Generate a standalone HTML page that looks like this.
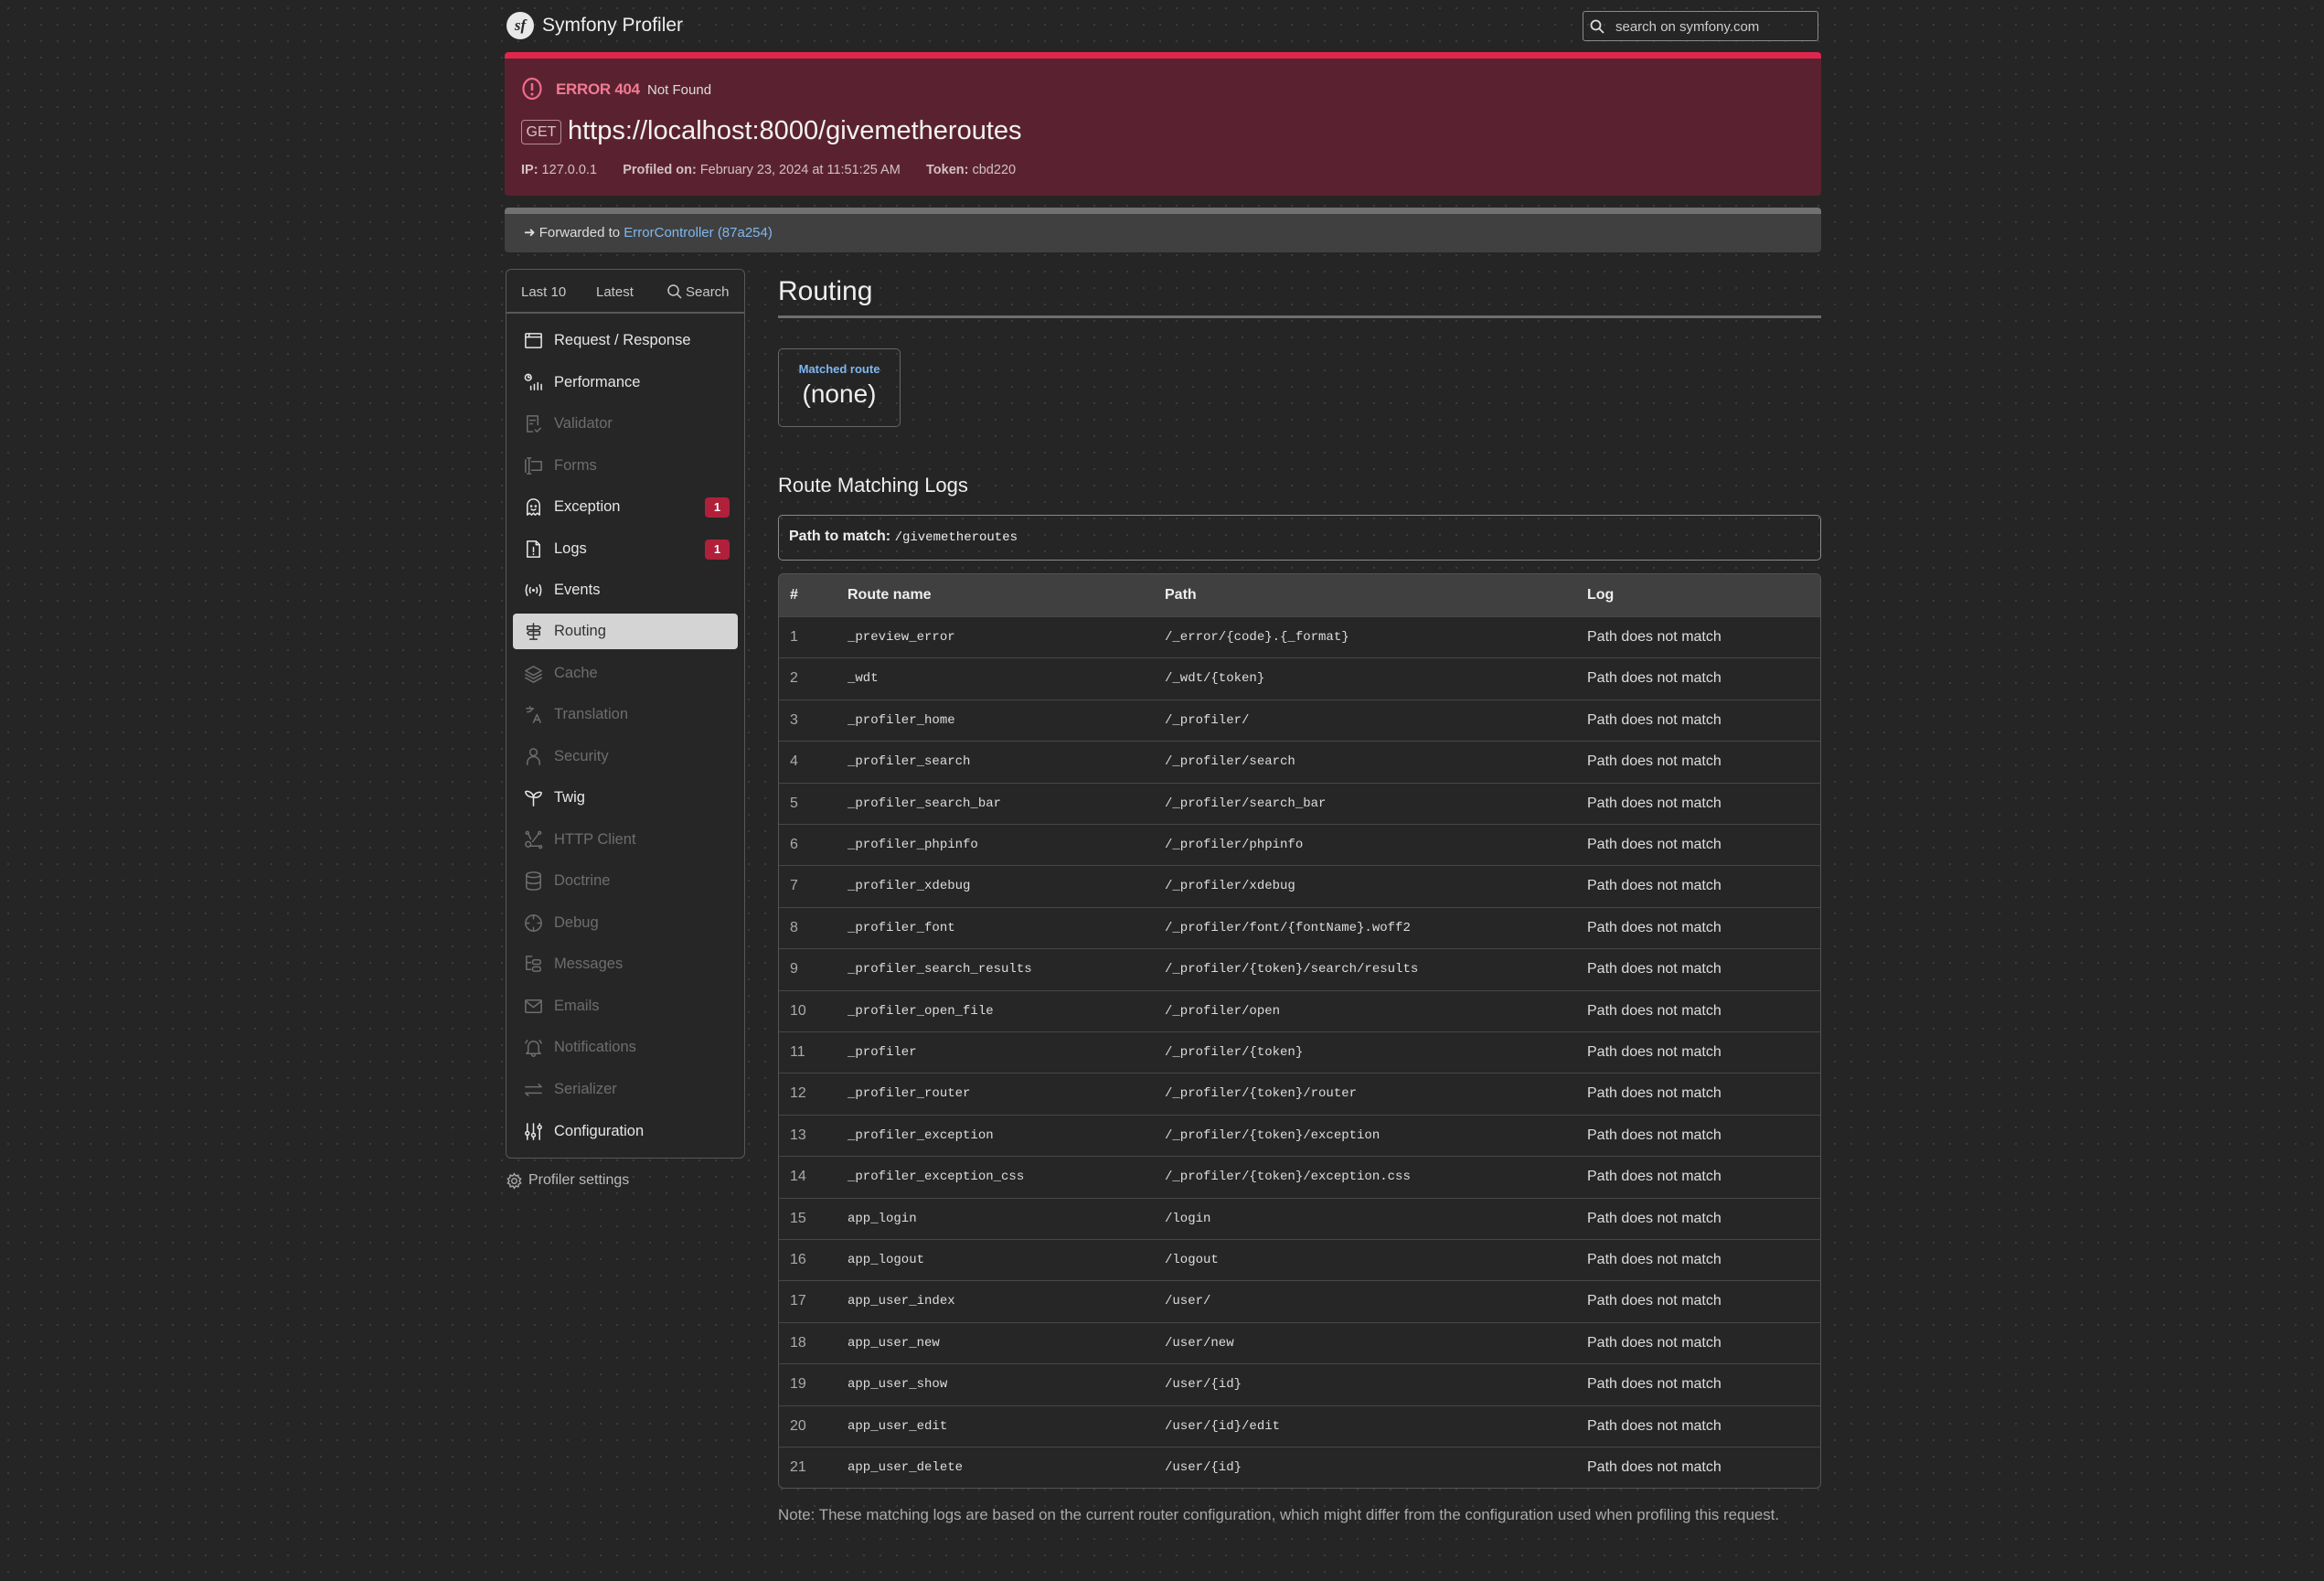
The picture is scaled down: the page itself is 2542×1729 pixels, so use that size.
<!DOCTYPE html>
<html><head><meta charset="utf-8"><style>
*{box-sizing:border-box;margin:0;padding:0}
html,body{width:2542px;height:1729px;overflow:hidden}
body{background:#252525;background-image:radial-gradient(#3b3b3b 1.2px,transparent 1.3px);background-size:18px 18px;font-family:"Liberation Sans",sans-serif;color:#e0e0e0;position:relative}
.a{position:absolute}
.mono{font-family:"Liberation Mono",monospace}
.menu .it{position:absolute;left:561px;width:246px;height:39px;display:flex;align-items:center;font-size:16.5px;border-radius:4px}
.menu .it svg{position:absolute;left:11px;top:8px;width:23px;height:23px;fill:none;stroke:currentColor;stroke-width:1.6;stroke-linecap:round;stroke-linejoin:round}
.menu .it span{position:absolute;left:45px}
.on{color:#e6e6e6}.off{color:#6d6d6d}
.badge{position:absolute;right:9px;top:9px;width:27px;height:22px;background:#b0203a;border-radius:4px;color:#fff;font-size:13px;font-weight:bold;text-align:center;line-height:22px}
.tbl{position:absolute;left:851px;top:627px;width:1141px;height:1001px;border:1px solid #555;border-radius:6px;overflow:hidden;background:#262626}
.row{position:absolute;left:0;width:1141px;height:45.4px;border-top:1px solid #474747;font-size:16px;color:#ddd}
.row div{position:absolute;top:13px}
.c1{left:12px;color:#aaa}.c2{left:75px;font-family:"Liberation Mono",monospace;font-size:14px;top:14px!important}.c3{left:422px;font-family:"Liberation Mono",monospace;font-size:14px;top:14px!important}.c4{left:884px}
</style></head><body>

<div class="a" style="left:554px;top:13px;width:30px;height:30px;border-radius:50%;background:#e8e8e8;color:#252525;font:italic bold 17px 'Liberation Serif',serif;text-align:center;line-height:30px">sf</div>
<div class="a" style="left:593px;top:16px;font-size:21px;color:#eee">Symfony Profiler</div>
<div class="a" style="left:1731px;top:12px;width:258px;height:33px;border:1px solid #8a8a8a;border-radius:3px">
<svg class="a" style="left:6px;top:7px" width="18" height="18" viewBox="0 0 18 18" fill="none" stroke="#ddd" stroke-width="1.8"><circle cx="7.5" cy="7.5" r="5"/><path d="M11 11l5 5"/></svg>
<div class="a" style="left:35px;top:8px;font-size:15px;color:#ccc">search on symfony.com</div></div>

<div class="a" style="left:552px;top:57px;width:1440px;height:157px;background:#5a2230;border-radius:4px;overflow:hidden">
<div class="a" style="left:0;top:0;width:100%;height:7px;background:#e1264e"></div>
<svg class="a" style="left:18px;top:27px" width="24" height="26" viewBox="0 0 24 26"><ellipse cx="12" cy="13" rx="9.5" ry="11" fill="none" stroke="#f06a8a" stroke-width="2.2"/><path d="M12 7v8" stroke="#f06a8a" stroke-width="2.5"/><circle cx="12" cy="19" r="1.5" fill="#f06a8a"/></svg>
<div class="a" style="left:56px;top:31px;font-size:17px;font-weight:bold;color:#f27a94;letter-spacing:-0.3px">ERROR 404</div>
<div class="a" style="left:156px;top:33px;font-size:15px;color:#ddd">Not Found</div>
<div class="a" style="left:18px;top:74px;width:44px;height:27px;border:1.5px solid #b58b96;border-radius:4px;color:#d9c1c7;font-size:16px;text-align:center;line-height:25px">GET</div>
<div class="a" style="left:69px;top:70px;font-size:29px;color:#f2f2f2">https://localhost:8000/givemetheroutes</div>
<div class="a" style="left:18px;top:121px;font-size:14.5px;color:#d2c0c5"><b>IP:</b> 127.0.0.1 &nbsp;&nbsp;&nbsp;&nbsp;&nbsp; <b>Profiled on:</b> February 23, 2024 at 11:51:25 AM &nbsp;&nbsp;&nbsp;&nbsp;&nbsp; <b>Token:</b> cbd220</div>
</div>

<div class="a" style="left:552px;top:227px;width:1440px;height:49px;background:#404040;border-radius:4px;overflow:hidden">
<div class="a" style="left:0;top:0;width:100%;height:7px;background:#717171"></div>
<div class="a" style="left:21px;top:18px;font-size:15px;color:#ddd">&#10140; Forwarded to <span style="color:#7fb7ef">ErrorController</span> <span style="color:#7fb7ef">(87a254)</span></div>
</div>

<div class="a" style="left:553px;top:294px;width:262px;height:973px;border:1.5px solid #585858;border-radius:6px;background:#262626"></div>
<div class="a" style="left:553px;top:341px;width:262px;height:1.5px;background:#585858"></div>
<div class="a" style="left:570px;top:311px;font-size:15px;color:#c8c8c8">Last 10</div>
<div class="a" style="left:652px;top:311px;font-size:15px;color:#c8c8c8">Latest</div>
<svg class="a" style="left:729px;top:310px" width="18" height="18" viewBox="0 0 18 18" fill="none" stroke="#c8c8c8" stroke-width="1.5"><circle cx="7.5" cy="7.5" r="5.5"/><path d="M11.5 11.5l4.5 4.5"/></svg>
<div class="a" style="left:750px;top:311px;font-size:15px;color:#c8c8c8">Search</div>

<div class="menu">
<div class="it on" style="top:353px"><svg viewBox="0 0 24 24"><rect x="3" y="4" width="18" height="16" rx="1"/><path d="M3 8h18M7 4v4"/></svg><span>Request / Response</span></div>
<div class="it on" style="top:399px"><svg viewBox="0 0 24 24"><circle cx="6" cy="6" r="3.5"/><path d="M6 4v2h2M9 20v-4M13 20v-6M17 20v-8M21 20v-6"/></svg><span>Performance</span></div>
<div class="it off" style="top:444px"><svg viewBox="0 0 24 24"><path d="M11 21H5V3h12v10M8 8h6M8 12h3M14 19l2 2 4-4"/></svg><span>Validator</span></div>
<div class="it off" style="top:490px"><svg viewBox="0 0 24 24"><path d="M3 5v14M7 3v18M5 3h4M5 21h4M10 7h11v10H10"/></svg><span>Forms</span></div>
<div class="it on" style="top:535px"><svg viewBox="0 0 24 24"><path d="M5 21V10a7 7 0 0 1 14 0v11l-2.5-2-2.5 2-2-2-2 2-2.5-2z"/><circle cx="9.5" cy="11" r=".6"/><circle cx="14.5" cy="11" r=".6"/><path d="M9.5 14.5q2.5 2 5 0"/></svg><span>Exception</span><div class="badge">1</div></div>
<div class="it on" style="top:581px"><svg viewBox="0 0 24 24"><path d="M5 3h10l4 4v14H5zM15 3v4h4M12 10v5M12 17.5v.5"/></svg><span>Logs</span><div class="badge">1</div></div>
<div class="it on" style="top:626px"><svg viewBox="0 0 24 24"><path d="M5 6q-3 6 0 12M19 6q3 6 0 12M8.5 9q-1.5 3 0 6M15.5 9q1.5 3 0 6"/><circle cx="12" cy="12" r=".8"/></svg><span>Events</span></div>
<div class="it" style="top:671px;background:#d4d4d4;color:#333"><svg viewBox="0 0 24 24"><path d="M12 3v18M8 21h8M5 6h13l2 2-2 2H5zM19 12H7l-2 2 2 2h12z"/></svg><span>Routing</span></div>
<div class="it off" style="top:717px"><svg viewBox="0 0 24 24"><path d="M12 4l9 5-9 5-9-5zM3 13l9 5 9-5M3 17l9 5 9-5"/></svg><span>Cache</span></div>
<div class="it off" style="top:762px"><svg viewBox="0 0 24 24"><path d="M4 5h8M8 3v2M5 9q4 0 6-4M12 21l4-9 4 9M13.5 18h5"/></svg><span>Translation</span></div>
<div class="it off" style="top:808px"><svg viewBox="0 0 24 24"><circle cx="12" cy="7" r="4"/><path d="M5 21v-2a7 7 0 0 1 14 0v2"/></svg><span>Security</span></div>
<div class="it on" style="top:853px"><svg viewBox="0 0 24 24"><path d="M12 21V11M12 11C11 5 5 4 3 5c0 4 5 7 9 6M12 11c1-5 7-6 9-5 0 4-5 7-9 5"/></svg><span>Twig</span></div>
<div class="it off" style="top:899px"><svg viewBox="0 0 24 24"><circle cx="6" cy="17" r="3"/><circle cx="5" cy="4" r="1.5"/><circle cx="19" cy="4" r="1.5"/><circle cx="20" cy="20" r="1.5"/><path d="M6 5l3 6M18 5l-7 9M8 19h10"/></svg><span>HTTP Client</span></div>
<div class="it off" style="top:944px"><svg viewBox="0 0 24 24"><ellipse cx="12" cy="5" rx="8" ry="3"/><path d="M4 5v14c0 4 16 4 16 0V5M4 12c0 4 16 4 16 0"/></svg><span>Doctrine</span></div>
<div class="it off" style="top:990px"><svg viewBox="0 0 24 24"><circle cx="12" cy="12" r="9"/><path d="M12 3v4M12 17v4M3 12h4M17 12h4"/></svg><span>Debug</span></div>
<div class="it off" style="top:1035px"><svg viewBox="0 0 24 24"><path d="M4 3v15h5M4 10h5M4 3h6"/><rect x="11" y="7" width="9" height="5" rx="2"/><rect x="11" y="15" width="9" height="5" rx="2"/></svg><span>Messages</span></div>
<div class="it off" style="top:1081px"><svg viewBox="0 0 24 24"><rect x="3" y="5" width="18" height="14" rx="1"/><path d="M3 6l9 7 9-7"/></svg><span>Emails</span></div>
<div class="it off" style="top:1126px"><svg viewBox="0 0 24 24"><path d="M6 17V11a6 6 0 0 1 12 0v6l2 2H4zM10 20a2 2 0 0 0 4 0M3 7l2-3M21 7l-2-3"/></svg><span>Notifications</span></div>
<div class="it off" style="top:1172px"><svg viewBox="0 0 24 24"><path d="M3 9h18l-3-3M21 16H3l3 3"/></svg><span>Serializer</span></div>
<div class="it on" style="top:1218px"><svg viewBox="0 0 24 24"><path d="M5 3v18M12 3v18M19 3v18"/><circle cx="5" cy="14" r="2" fill="#262626"/><circle cx="12" cy="16" r="2" fill="#262626"/><circle cx="19" cy="7" r="2" fill="#262626"/></svg><span>Configuration</span></div>
</div>
<svg class="a" style="left:553px;top:1282px" width="19" height="19" viewBox="0 0 24 24" fill="none" stroke="#aaa" stroke-width="1.8"><circle cx="12" cy="12" r="3.5"/><path d="M12 2l2 3 3.5-1 .5 3.5 3 1.5-2 3 2 3-3 1.5-.5 3.5-3.5-1-2 3-2-3-3.5 1-.5-3.5-3-1.5 2-3-2-3 3-1.5.5-3.5 3.5 1z"/></svg>
<div class="a" style="left:578px;top:1282px;font-size:16px;color:#bbb">Profiler settings</div>

<div class="a" style="left:851px;top:302px;font-size:30px;color:#eee">Routing</div>
<div class="a" style="left:851px;top:345px;width:1141px;height:3px;background:#6e6e6e"></div>
<div class="a" style="left:851px;top:381px;width:134px;height:86px;border:1.5px solid #666;border-radius:5px;text-align:center">
<div style="margin-top:14px;font-size:13px;font-weight:bold;color:#7fb7ef">Matched route</div>
<div style="margin-top:4px;font-size:28px;color:#eee">(none)</div></div>
<div class="a" style="left:851px;top:518px;font-size:22px;color:#eee">Route Matching Logs</div>
<div class="a" style="left:851px;top:563px;width:1141px;height:50px;border:1.5px solid #8a8a8a;border-radius:5px">
<div class="a" style="left:11px;top:14px;font-size:16px;color:#eee"><b>Path to match:</b> <span class="mono" style="font-size:14px">/givemetheroutes</span></div></div>

<div class="tbl">
<div class="a" style="left:0;top:0;width:100%;height:46px;background:#404040;font-weight:bold;font-size:16px;color:#eee">
<div class="a" style="left:12px;top:14px">#</div><div class="a" style="left:75px;top:14px">Route name</div><div class="a" style="left:422px;top:14px">Path</div><div class="a" style="left:884px;top:14px">Log</div></div>
<div class="row" style="top:46px"><div class="c1">1</div><div class="c2">_preview_error</div><div class="c3">/_error/{code}.{_format}</div><div class="c4">Path does not match</div></div>
<div class="row" style="top:91.4px"><div class="c1">2</div><div class="c2">_wdt</div><div class="c3">/_wdt/{token}</div><div class="c4">Path does not match</div></div>
<div class="row" style="top:136.8px"><div class="c1">3</div><div class="c2">_profiler_home</div><div class="c3">/_profiler/</div><div class="c4">Path does not match</div></div>
<div class="row" style="top:182.2px"><div class="c1">4</div><div class="c2">_profiler_search</div><div class="c3">/_profiler/search</div><div class="c4">Path does not match</div></div>
<div class="row" style="top:227.6px"><div class="c1">5</div><div class="c2">_profiler_search_bar</div><div class="c3">/_profiler/search_bar</div><div class="c4">Path does not match</div></div>
<div class="row" style="top:273px"><div class="c1">6</div><div class="c2">_profiler_phpinfo</div><div class="c3">/_profiler/phpinfo</div><div class="c4">Path does not match</div></div>
<div class="row" style="top:318.4px"><div class="c1">7</div><div class="c2">_profiler_xdebug</div><div class="c3">/_profiler/xdebug</div><div class="c4">Path does not match</div></div>
<div class="row" style="top:363.8px"><div class="c1">8</div><div class="c2">_profiler_font</div><div class="c3">/_profiler/font/{fontName}.woff2</div><div class="c4">Path does not match</div></div>
<div class="row" style="top:409.2px"><div class="c1">9</div><div class="c2">_profiler_search_results</div><div class="c3">/_profiler/{token}/search/results</div><div class="c4">Path does not match</div></div>
<div class="row" style="top:454.6px"><div class="c1">10</div><div class="c2">_profiler_open_file</div><div class="c3">/_profiler/open</div><div class="c4">Path does not match</div></div>
<div class="row" style="top:500px"><div class="c1">11</div><div class="c2">_profiler</div><div class="c3">/_profiler/{token}</div><div class="c4">Path does not match</div></div>
<div class="row" style="top:545.4px"><div class="c1">12</div><div class="c2">_profiler_router</div><div class="c3">/_profiler/{token}/router</div><div class="c4">Path does not match</div></div>
<div class="row" style="top:590.8px"><div class="c1">13</div><div class="c2">_profiler_exception</div><div class="c3">/_profiler/{token}/exception</div><div class="c4">Path does not match</div></div>
<div class="row" style="top:636.2px"><div class="c1">14</div><div class="c2">_profiler_exception_css</div><div class="c3">/_profiler/{token}/exception.css</div><div class="c4">Path does not match</div></div>
<div class="row" style="top:681.6px"><div class="c1">15</div><div class="c2">app_login</div><div class="c3">/login</div><div class="c4">Path does not match</div></div>
<div class="row" style="top:727px"><div class="c1">16</div><div class="c2">app_logout</div><div class="c3">/logout</div><div class="c4">Path does not match</div></div>
<div class="row" style="top:772.4px"><div class="c1">17</div><div class="c2">app_user_index</div><div class="c3">/user/</div><div class="c4">Path does not match</div></div>
<div class="row" style="top:817.8px"><div class="c1">18</div><div class="c2">app_user_new</div><div class="c3">/user/new</div><div class="c4">Path does not match</div></div>
<div class="row" style="top:863.2px"><div class="c1">19</div><div class="c2">app_user_show</div><div class="c3">/user/{id}</div><div class="c4">Path does not match</div></div>
<div class="row" style="top:908.6px"><div class="c1">20</div><div class="c2">app_user_edit</div><div class="c3">/user/{id}/edit</div><div class="c4">Path does not match</div></div>
<div class="row" style="top:954px"><div class="c1">21</div><div class="c2">app_user_delete</div><div class="c3">/user/{id}</div><div class="c4">Path does not match</div></div>
</div>
<div class="a" style="left:851px;top:1647px;font-size:16.9px;color:#aaa">Note: These matching logs are based on the current router configuration, which might differ from the configuration used when profiling this request.</div>
</body></html>
